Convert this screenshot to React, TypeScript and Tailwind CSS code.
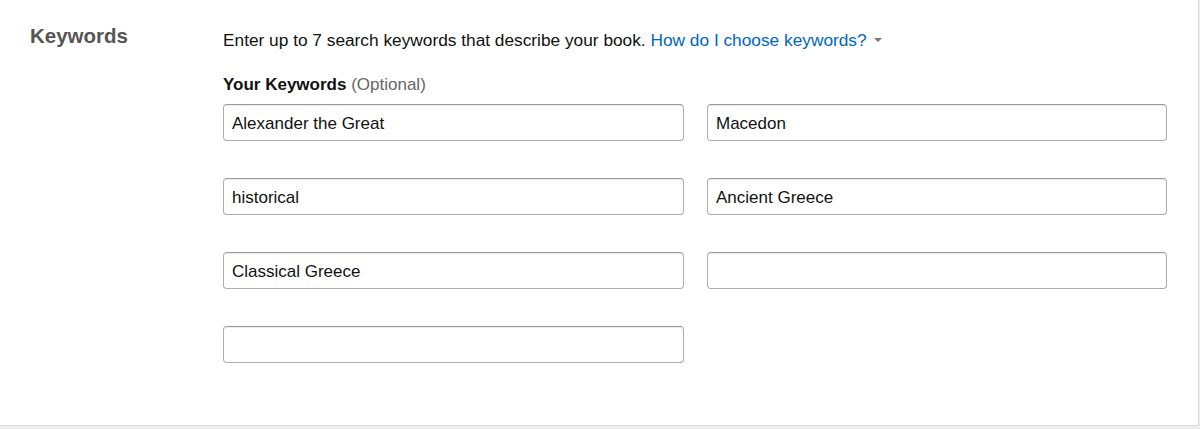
import React from "react";

const values = [
  "Alexander the Great",
  "Macedon",
  "historical",
  "Ancient Greece",
  "Classical Greece",
  "",
  "",
];

export default function App() {
  return (
    <div className="h-[429px] w-[1200px] bg-[#eeeeee] font-['Liberation_Sans',Arial,sans-serif]">
      <div className="flex h-[426px] w-[1199px] border-r border-b border-[#dddddd] bg-white">
        <div className="w-[223px] shrink-0 pl-[30px] pt-[23px]">
          <h2 className="text-[20.5px] font-bold leading-[26px] text-[#555555]">Keywords</h2>
        </div>
        <div className="flex-1 pt-[29px]">
          <p className="text-[17.3px] leading-[22px] text-[#111111]">
            Enter up to 7 search keywords that describe your book.{" "}
            <span className="text-[#0066c0]">How do I choose keywords?</span>
            <span className="ml-[7px] inline-block align-middle border-x-[4px] border-t-[4px] border-x-transparent border-t-[#777777] mb-[3px]" />
          </p>
          <div className="mt-[23px] text-[17px] leading-[22px] text-[#111111]">
            <span className="font-bold">Your Keywords</span>{" "}
            <span className="text-[#666666]">(Optional)</span>
          </div>
          <div className="mt-[8px] grid w-[944px] grid-cols-[461px_460px] gap-x-[23px] gap-y-[37px]">
            {values.map((v, i) => (
              <input
                key={i}
                defaultValue={v}
                className="h-[37px] w-full rounded-[4px] border border-[#adadad] border-t-[#9a9a9a] bg-white px-[8px] pt-[2px] text-[17px] text-[#111111] shadow-[inset_0_1px_0_rgba(0,0,0,0.07)] outline-none"
              />
            ))}
          </div>
        </div>
      </div>
    </div>
  );
}
